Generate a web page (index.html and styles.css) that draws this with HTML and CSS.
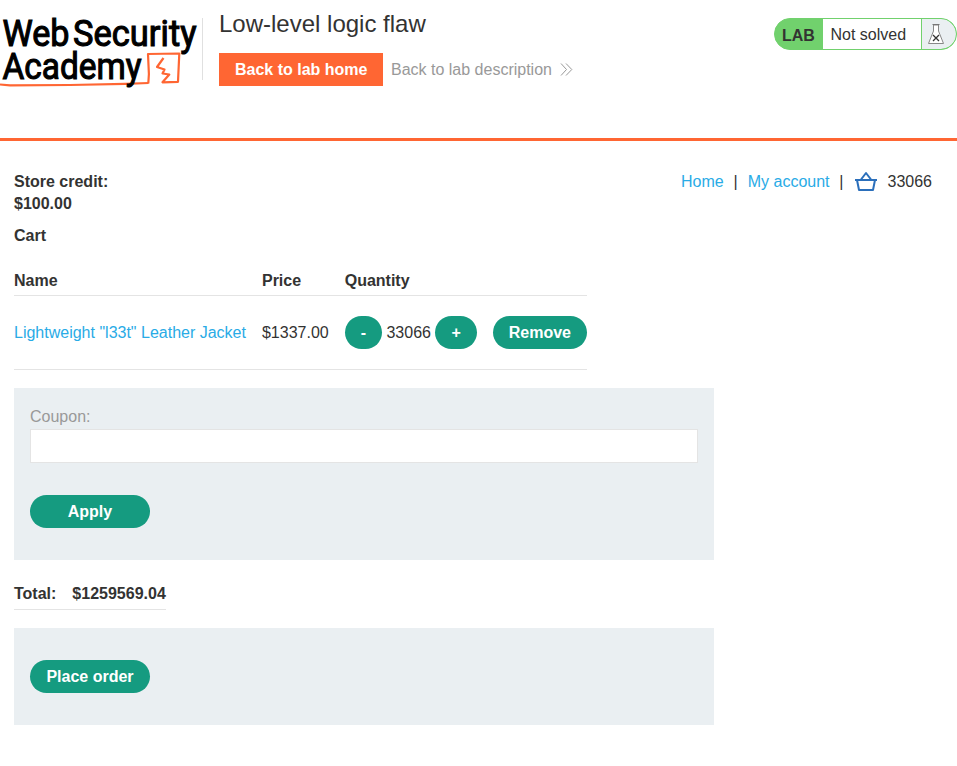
FILE: index.html
```html
<!DOCTYPE html>
<html lang="en">
<head>
<meta charset="utf-8">
<title>Low-level logic flaw</title>
<link rel="stylesheet" href="styles.css">
</head>
<body>
<header class="lab-header">
  <svg class="logo" width="203" height="100" viewBox="0 0 203 100" aria-label="Web Security Academy">
    <g fill="none" stroke="#ff6633">
      <path d="M0 84.500 L10 85.300 L70 85 L125 83.800 L148.500 83" stroke-width="2.200"/>
      <path d="M148.300 83.500 L148.900 74 L148 54 L179.300 53.500 L178 81.800 L162.500 82.300 L169.300 74.500 L162.500 73.500 L164.500 69.500 L157 67 L163.500 58" stroke-width="2.200" stroke-linejoin="round"/>
    </g>
    <g class="logo-text">
      <text x="2.500" y="46" textLength="67" lengthAdjust="spacingAndGlyphs">Web</text>
      <text x="73" y="46" textLength="123.500" lengthAdjust="spacingAndGlyphs">Security</text>
      <text x="2.500" y="78.800" textLength="139" lengthAdjust="spacingAndGlyphs">Academy</text>
    </g>
  </svg>
  <div class="title">
    <h2>Low-level logic flaw</h2>
    <div class="actions">
      <a class="home-button">Back to lab home</a>
      <a class="description">Back to lab description</a>
      <svg class="chevrons" width="13" height="13" viewBox="0 0 13 13"><path d="M1 .5l5.500 6-5.500 6M6 .5l5.800 6-5.800 6" fill="none" stroke="#999"/></svg>
    </div>
  </div>
  <div class="status">
    <b>LAB</b><span>Not solved</span>
    <i><svg width="18" height="22" viewBox="0 0 18 22"><path d="M6.500 2V8L1.500 20.500H16.500L11.500 8V2Z" fill="#fff" stroke="#888"/><path d="M5.500 1.500h7" stroke="#777"/><path d="M6 12l6 6M12 12l-6 6" stroke="#333" stroke-width="1.300"/></svg></i>
  </div>
</header>
<main>
  <div class="top">
    <strong>Store credit:<br>$100.00</strong>
    <nav><a>Home</a><span class="bar">|</span><a>My account</a><span class="bar">|</span>
      <svg width="24" height="22" viewBox="0 0 24 22"><path d="M1 9H23M3 9l2 10H19L21 9M7 8.500L12 2l5 6.500" fill="none" stroke="#2b6fbb" stroke-width="2" stroke-linejoin="round"/></svg>
      <span>33066</span></nav>
  </div>
  <h4>Cart</h4>
  <table>
    <thead><tr><th>Name</th><th>Price</th><th>Quantity</th><th></th></tr></thead>
    <tbody><tr>
      <td class="text"><a>Lightweight "l33t" Leather Jacket</a></td>
      <td class="text">$1337.00</td>
      <td><div class="quantity"><button>-</button><span>33066</span><button>+</button></div></td>
      <td><button>Remove</button></td>
    </tr></tbody>
  </table>
  <form class="panel coupon">
    <label for="coupon">Coupon:</label>
    <input id="coupon" type="text">
    <button class="wide" type="button">Apply</button>
  </form>
  <div class="total"><span>Total:</span><span>$1259569.04</span></div>
  <form class="panel order"><button class="wide" type="button">Place order</button></form>
</main>
</body>
</html>
```
FILE: styles.css
```css
* { box-sizing: border-box; }
body {
  margin: 0;
  background: #fff;
  color: #333332;
  font: 16px/22px "Liberation Sans", Arial, sans-serif;
}
.lab-header {
  display: flex;
  height: 141px;
  border-bottom: 3px solid #ff6633;
}
.logo {
  flex: none;
  overflow: visible;
  background: linear-gradient(#e0e0e0, #e0e0e0) 202px 18px / 1px 62px no-repeat;
}
.logo-text { font: 400 36.500px Roboto, sans-serif; fill: #000; stroke: #000; stroke-width: 1.100px; }
.title { flex: 1; padding: 8px 0 0 16px; }
h2 { margin: 0; font-size: 24px; font-weight: 400; line-height: 32px; }
.actions { display: flex; align-items: center; margin-top: 13px; }
.home-button {
  height: 33px;
  padding: 0 16px;
  background: #ff6633;
  font-weight: 700;
  line-height: 33px;
}
.description { margin-left: 7.500px; }
.chevrons { margin-left: 8.500px; }
.status {
  display: flex;
  width: 183px;
  height: 32px;
  margin-top: 18px;
  overflow: hidden;
  border: 1px solid #71d16d;
  border-radius: 16px;
  background: #71d16d;
  line-height: 32px;
}
.status b { width: 48px; padding-left: 7px; line-height: 34px; }
.status span { width: 98px; padding-left: 7.500px; background: #fff; }
.status i {
  display: flex;
  flex: 1;
  align-items: center;
  padding-left: 5px;
  border-left: 1px solid #71d16d;
  border-radius: 0 15px 15px 0;
  background: #eaeff2;
}
main { padding: 30px 14px 0; }
.top { display: flex; justify-content: space-between; }
nav { display: flex; height: 22px; align-items: center; padding-right: 11px; }
nav svg { margin-right: 10px; }
.bar { width: 4px; margin: 0 10.300px 0 9.700px; }
a { color: #29abe6; }
a.home-button { color: #fff; }
a.description { color: #999; }
h4 { margin: 10px 0 0; font-size: 16px; line-height: 22px; }
table { margin-top: 20px; border-collapse: collapse; }
th, td { padding: 0 16px 0 0; border-bottom: 1px solid #e4e4e4; text-align: left; }
th:last-child, td:last-child { padding-right: 0; }
th { height: 28px; }
td { height: 74px; }
td.text { padding-top: 1px; }
.quantity { display: flex; align-items: center; gap: 4.450px; }
.quantity span { line-height: 23px; padding-top: 1px; }
button {
  display: block;
  height: 33px;
  padding: 0 16px;
  border: 0;
  border-radius: 16.500px;
  background: #159b80;
  color: #fff;
  font: 700 16px/33px "Liberation Sans", Arial, sans-serif;
}
.wide { width: 120px; padding: 0; }
.panel { width: 700px; padding: 32px 16px; background: #eaeff2; }
.coupon { height: 172px; margin-top: 18px; padding-top: 18px; }
label { display: block; height: 23px; color: #999; }
input { display: block; width: 668px; height: 34px; margin-bottom: 32px; border: 1px solid #e4e4e4; background: #fff; }
.total {
  display: flex;
  width: max-content;
  height: 27px;
  margin: 23px 0 18px;
  gap: 16px;
  border-bottom: 1px solid #e4e4e4;
  font-weight: 700;
}
.order { height: 97px; }
```
